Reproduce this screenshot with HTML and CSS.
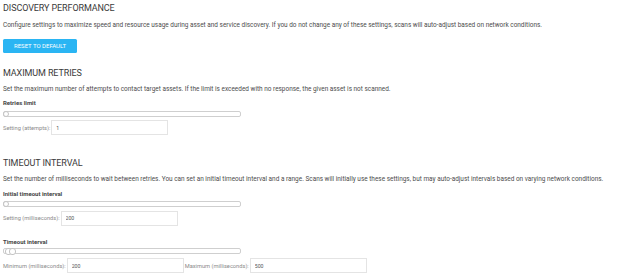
FILE: index.html
```html
<!DOCTYPE html>
<html>
<head>
<meta charset="utf-8">
<link rel="stylesheet" href="styles.css">
</head>
<body>
<div class="page">
  <section class="section first">
    <h2 class="title">DISCOVERY PERFORMANCE</h2>
    <p class="desc">Configure settings to maximize speed and resource usage during asset and service discovery. If you do not change any of these settings, scans will auto-adjust based on network conditions.</p>
    <button class="btn">RESET TO DEFAULT</button>
  </section>

  <section class="section second">
    <h2 class="title">MAXIMUM RETRIES</h2>
    <p class="desc">Set the maximum number of attempts to contact target assets. If the limit is exceeded with no response, the given asset is not scanned.</p>
    <div class="label">Retries limit</div>
    <div class="slider"><span class="thumb"></span></div>
    <div class="field-row">
      <label class="field"><span class="field-label">Setting (attempts):</span><input class="field-input" type="text" value="1"></label>
    </div>
  </section>

  <section class="section third">
    <h2 class="title">TIMEOUT INTERVAL</h2>
    <p class="desc">Set the number of milliseconds to wait between retries. You can set an initial timeout interval and a range. Scans will initially use these settings, but may auto-adjust intervals based on varying network conditions.</p>
    <div class="label">Initial timeout interval</div>
    <div class="slider slider-tight"><span class="thumb"></span></div>
    <div class="field-row">
      <label class="field"><span class="field-label">Setting (milliseconds):</span><input class="field-input" type="text" value="200"></label>
    </div>
    <div class="label label-spaced">Timeout interval</div>
    <div class="slider slider-range"><span class="thumb thumb-a"></span><span class="thumb thumb-b"></span></div>
    <div class="field-row">
      <label class="field"><span class="field-label">Minimum (milliseconds):</span><input class="field-input" type="text" value="200"></label>
      <label class="field"><span class="field-label">Maximum (milliseconds):</span><input class="field-input" type="text" value="500"></label>
    </div>
  </section>
</div>
</body>
</html>
```

FILE: styles.css
```css
* { box-sizing: border-box; }

html, body {
  margin: 0;
  padding: 0;
  background: #ffffff;
}

body {
  font-family: Roboto, "Liberation Sans", Arial, sans-serif;
  color: #444;
}

.page {
  padding: 2px 0 0 3px;
  width: 639px;
}

.section {
  display: flex;
  flex-direction: column;
  align-items: flex-start;
}

.second { margin-top: 13.5px; }
.third { margin-top: 21.5px; }

.title {
  margin: 0;
  font-size: 9px;
  line-height: 12px;
  font-weight: 400;
  color: #3a3a3a;
  letter-spacing: -0.1px;
}

.desc {
  margin: 6.5px 0 0 0;
  font-size: 6.45px;
  line-height: 8px;
  color: #4d4d4d;
  white-space: nowrap;
}

.first .desc { margin-top: 7px; }

.btn {
  margin-top: 10px;
  width: 74px;
  height: 14px;
  padding: 0;
  border: none;
  border-radius: 1.5px;
  background: #2ab5f3;
  color: #ffffff;
  font-family: Roboto, "Liberation Sans", Arial, sans-serif;
  font-size: 6px;
  line-height: 14px;
  text-align: center;
}

.label {
  margin-top: 6px;
  font-size: 6px;
  line-height: 8px;
  font-weight: 700;
  color: #444;
}

.third .label { margin-top: 7px; }
.third .label.label-spaced { margin-top: 12.5px; }

.slider {
  position: relative;
  margin-top: 4px;
  width: 238px;
  height: 6px;
  display: flex;
  align-items: center;
}

.slider::before {
  content: "";
  display: block;
  width: 100%;
  height: 4px;
  border: 0.7px solid #cfcfcf;
  border-radius: 2px;
  background: #fff;
}

.slider-tight { margin-top: 3px; }
.slider-range { margin-top: 1.5px; height: 7px; }

.thumb {
  position: absolute;
  left: 0;
  top: 0;
  width: 6px;
  height: 6px;
  border: 0.7px solid #c4c4c4;
  border-radius: 50%;
  background: #fff;
}

.slider-range .thumb { height: 7px; width: 7px; border-radius: 3px; }
.thumb-a { left: 2px !important; }
.thumb-b { left: 6px !important; }

.field-row {
  margin-top: 3px;
  display: flex;
  align-items: center;
}

.third .field-row { margin-top: 3.5px; }

.field {
  display: flex;
  align-items: center;
  gap: 1px;
}

.field-label {
  font-size: 5.7px;
  color: #8a8a8a;
}

.field-input {
  width: 117px;
  height: 15px;
  margin: 0 1px 0 0;
  padding: 0 0 0 4px;
  border: 0.7px solid #e4e4e4;
  border-radius: 0;
  font-family: Roboto, "Liberation Sans", Arial, sans-serif;
  font-size: 5.2px;
  color: #555;
  background: #fff;
  outline: none;
}
```
